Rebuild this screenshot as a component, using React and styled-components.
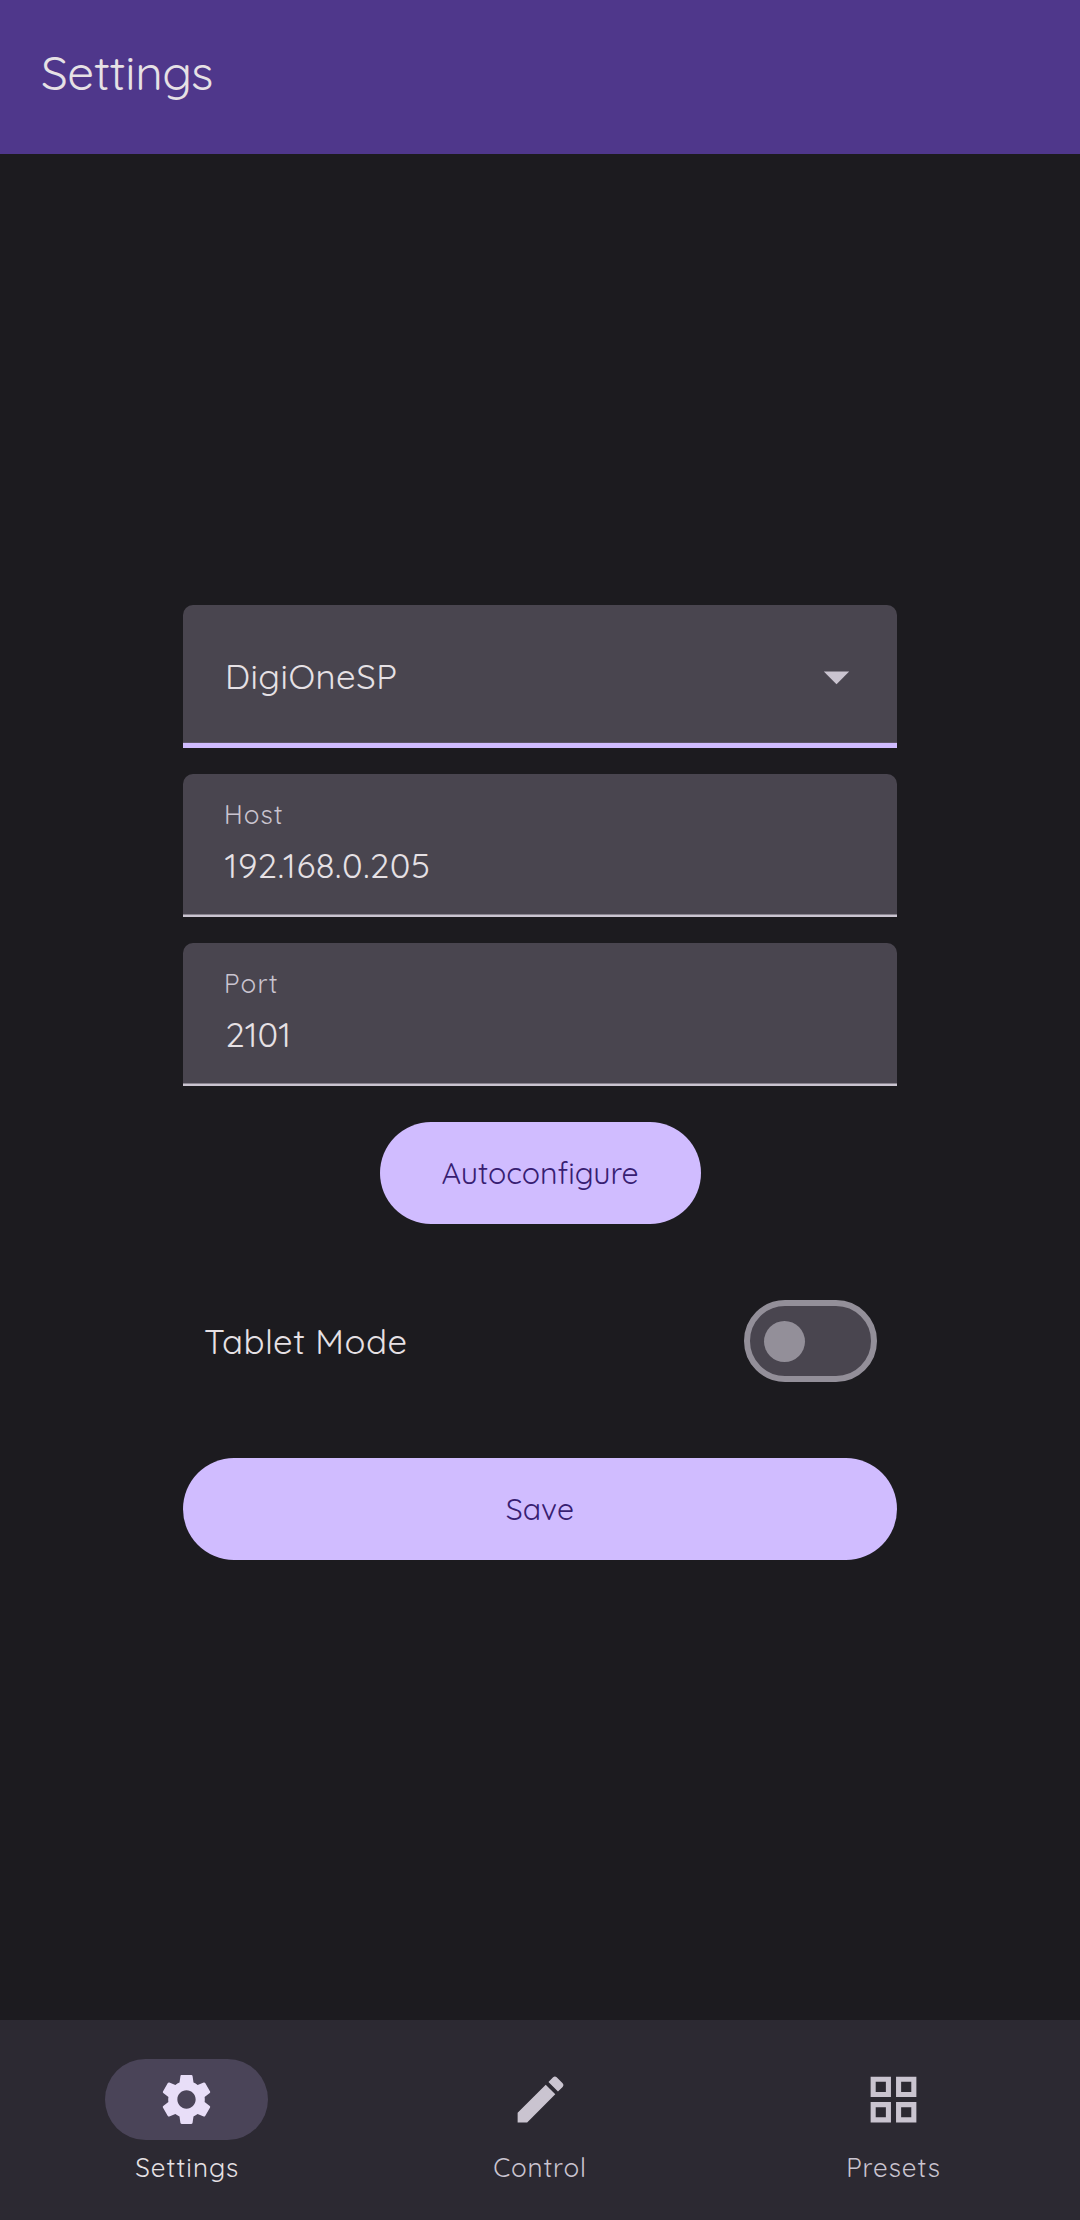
import React from "react";
import styled, { createGlobalStyle } from "styled-components";
import { MdSettings, MdCreate, MdGridView, MdArrowDropDown } from "react-icons/md";

const GlobalStyle = createGlobalStyle`
  *, *::before, *::after { box-sizing: border-box; }
  body { margin: 0; background: #1c1b1f; }
  button { font: inherit; border: 0; margin: 0; padding: 0; cursor: pointer; }
`;

const Screen = styled.div`
  display: flex;
  flex-direction: column;
  width: 1080px;
  height: 2220px;
  background: #1c1b1f;
  color: #e6e1e5;
  font-family: Quicksand, Inter, "Liberation Sans", sans-serif;
  font-weight: 400;
  font-variant-ligatures: none;
`;

const Text = styled.span`
  display: block;
  white-space: nowrap;
  font-size: ${(p) => p.$size}px;
  font-weight: 400;
  line-height: ${(p) => p.$line || 40}px;
  letter-spacing: ${(p) => p.$track || 0}px;
  margin: 0 0 0 ${(p) => p.$nudge || 0}px;
`;

const Header = styled.header`
  flex: none;
  display: flex;
  align-items: center;
  height: 154px;
  padding: 0 41px 10px;
  background: #4f378b;
`;

const Main = styled.main`
  flex: 1;
  display: flex;
  flex-direction: column;
  align-items: center;
  width: 714px;
  margin: 0 auto;
  padding-top: 451px;
`;

const Field = styled.div`
  width: 100%;
  height: 143px;
  margin-bottom: 26px;
  padding: 26px 41px 0;
  border-radius: 10px 10px 0 0;
  background: linear-gradient(to top, #cac4d0 2px, #8a8590 2px, #8a8590 3px, transparent 3px) #49454f;
`;

const FieldLabel = styled.div`
  height: 30px;
  margin-bottom: 15px;
  color: #cac4d0;
`;

const Select = styled(Field)`
  display: flex;
  align-items: center;
  justify-content: space-between;
  padding: 0 30px 0 42px;
  background: linear-gradient(to top, #d0bcff 5px, #5c5565 5px, #5c5565 6px, transparent 6px) #49454f;

  svg {
    color: #cac4d0;
  }
`;

const SelectValue = styled.div`
  padding-bottom: 2px;
`;

const PillButton = styled.button`
  display: flex;
  align-items: center;
  justify-content: center;
  width: ${(p) => p.$width}px;
  height: 102px;
  margin-top: ${(p) => p.$top || 0}px;
  border-radius: 51px;
  background: #d0bcff;
  color: #381e72;
`;

const SwitchRow = styled.div`
  display: flex;
  align-items: center;
  justify-content: space-between;
  width: 100%;
  margin: 76px 0;
  padding: 0 20px 0 21px;
`;

const Switch = styled.div`
  display: flex;
  align-items: center;
  width: 133px;
  height: 82px;
  padding-left: 14px;
  border: 6px solid #938f99;
  border-radius: 41px;
  background: #49454f;
`;

const Knob = styled.div`
  width: 41px;
  height: 41px;
  border-radius: 50%;
  background: #938f99;
`;

const Nav = styled.nav`
  flex: none;
  display: flex;
  height: 200px;
  padding: 39px 9.75px 0;
  background: #2c2932;
`;

const NavItem = styled.div`
  flex: 1;
  display: flex;
  flex-direction: column;
  align-items: center;
  gap: 13px;
  color: ${(p) => (p.$active ? "#e6e1e5" : "#cac4d0")};
`;

const Indicator = styled.div`
  display: flex;
  align-items: center;
  justify-content: center;
  width: 163px;
  height: 81px;
  border-radius: 41px;
  background: ${(p) => (p.$active ? "#4a4458" : "transparent")};
  color: ${(p) => (p.$active ? "#e8def8" : "#cac4d0")};
`;

const fields = [
  { label: "Host", labelTrack: 1.06, value: "192.168.0.205", track: 0.59, nudge: 0.5 },
  { label: "Port", labelTrack: 1.29, value: "2101", track: 0, nudge: 1.5 },
];

const tabs = [
  { label: "Settings", Icon: MdSettings, track: 1.06, nudge: 1.5, active: true },
  { label: "Control", Icon: MdCreate, track: 0.83, nudge: 0 },
  { label: "Presets", Icon: MdGridView, track: 0.95, nudge: 0 },
];

export default function App() {
  return (
    <>
      <GlobalStyle />
      <Screen>
        <Header>
          <Text as="h1" $size={47.7} $track={-0.43}>Settings</Text>
        </Header>
        <Main>
          <Select>
            <SelectValue>
              <Text $size={34.7} $track={0.5}>DigiOneSP</Text>
            </SelectValue>
            <MdArrowDropDown size={61} />
          </Select>
          {fields.map((f) => (
            <Field key={f.label}>
              <FieldLabel>
                <Text $size={26} $line={30} $track={f.labelTrack}>{f.label}</Text>
              </FieldLabel>
              <Text $size={34.7} $track={f.track} $nudge={f.nudge}>{f.value}</Text>
            </Field>
          ))}
          <PillButton $width={321} $top={10}>
            <Text $size={30.3} $track={-0.07}>Autoconfigure</Text>
          </PillButton>
          <SwitchRow>
            <Text $size={34.7} $track={0.48}>Tablet Mode</Text>
            <Switch>
              <Knob />
            </Switch>
          </SwitchRow>
          <PillButton $width={714}>
            <Text $size={30.3} $track={0.14}>Save</Text>
          </PillButton>
        </Main>
        <Nav>
          {tabs.map(({ label, Icon, track, nudge, active }) => (
            <NavItem key={label} $active={active}>
              <Indicator $active={active}>
                <Icon size={61} />
              </Indicator>
              <Text $size={26} $line={30} $track={track} $nudge={nudge}>{label}</Text>
            </NavItem>
          ))}
        </Nav>
      </Screen>
    </>
  );
}
